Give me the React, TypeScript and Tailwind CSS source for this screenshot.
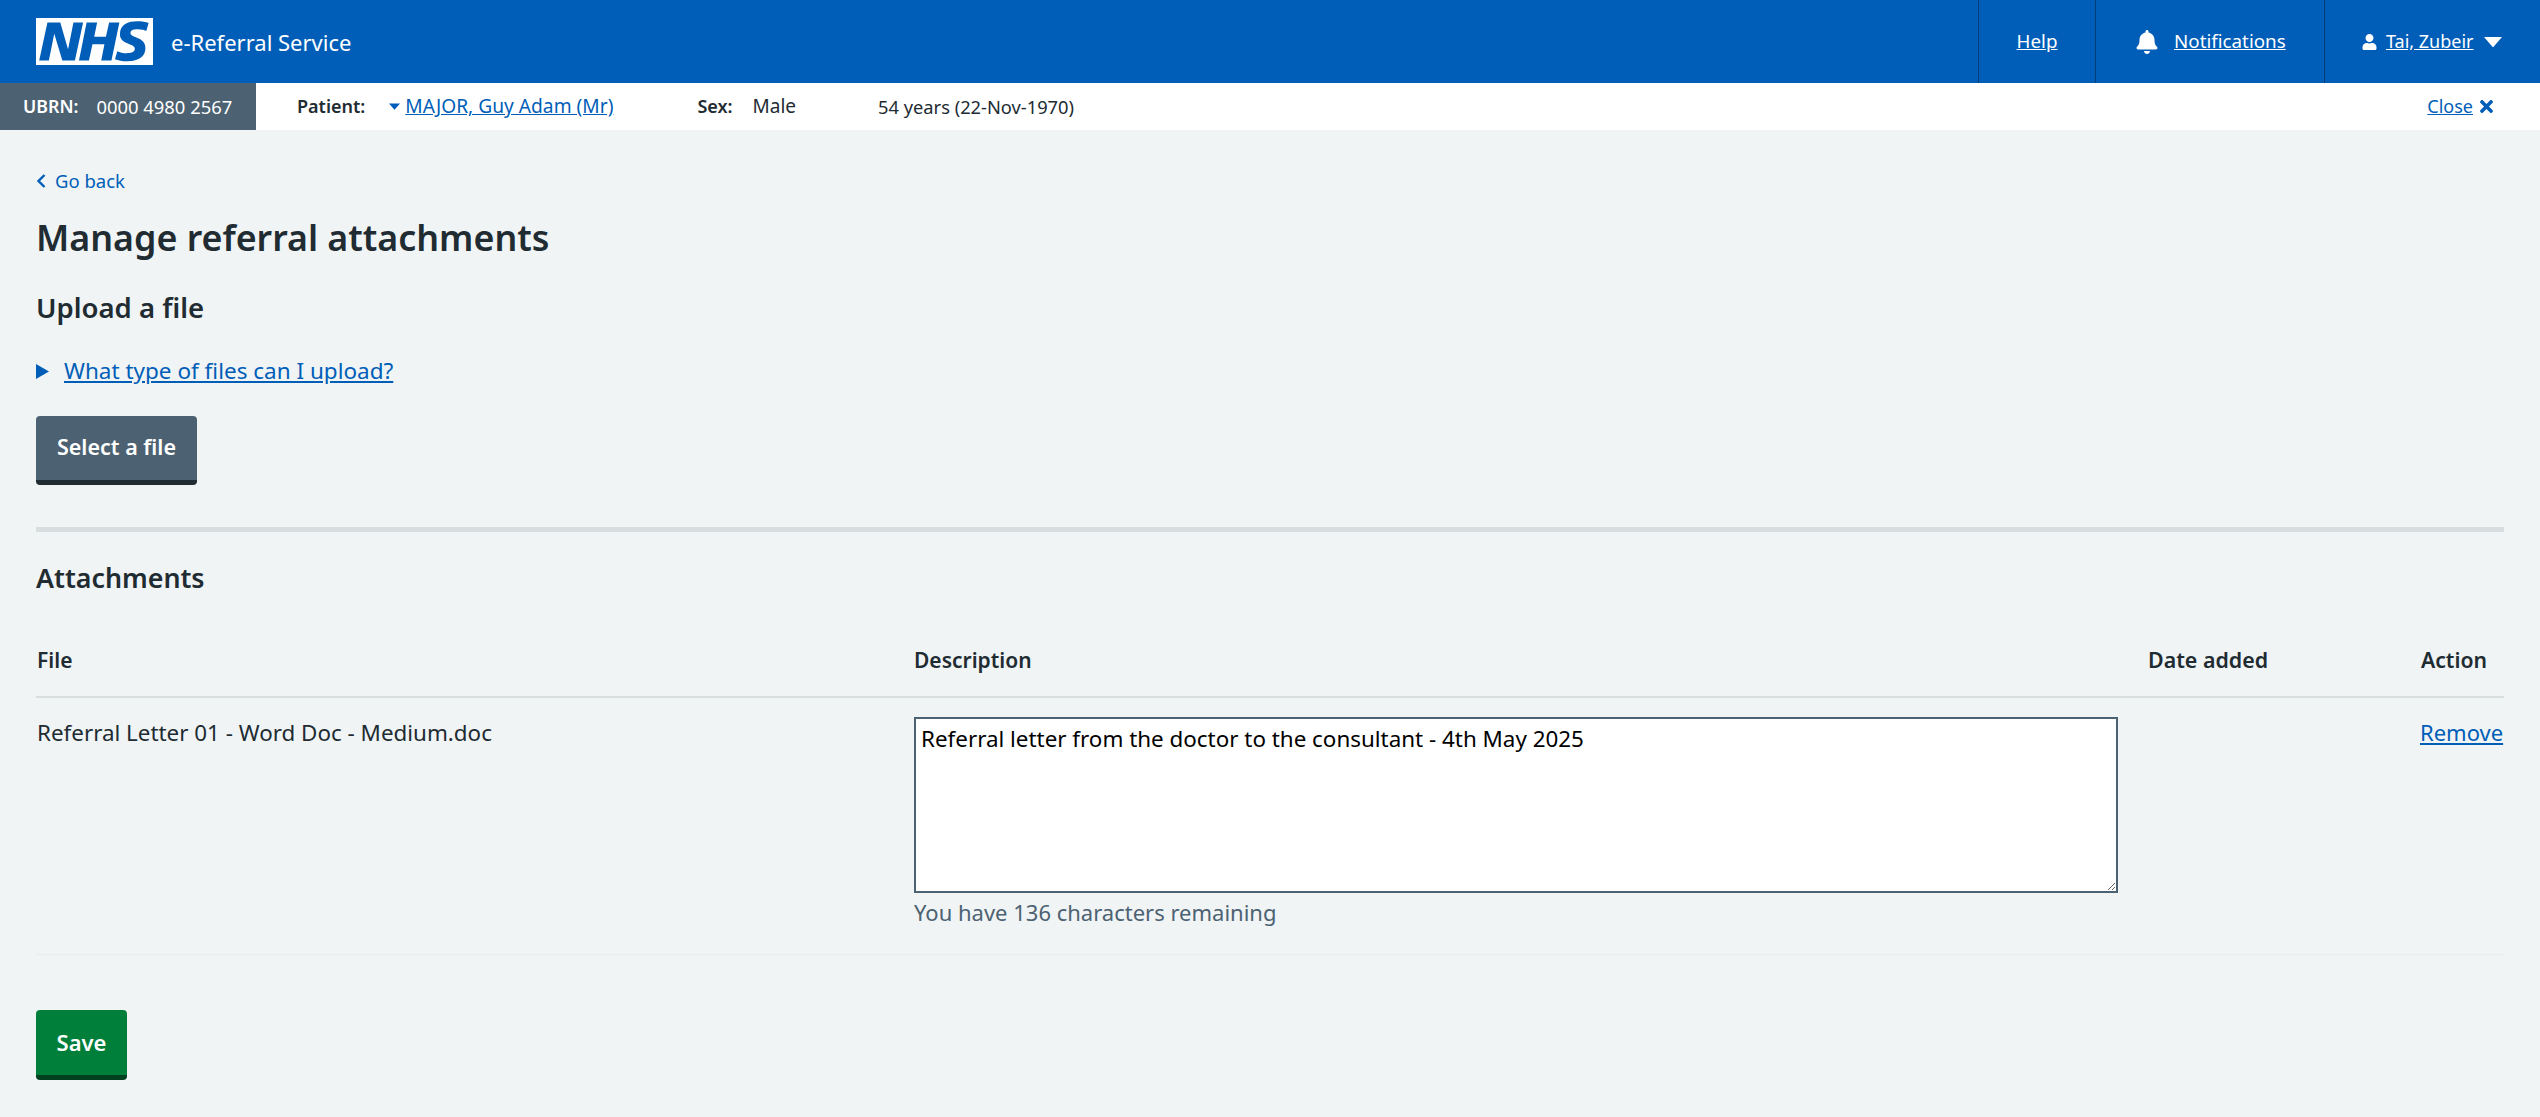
import { FaBell, FaTimes, FaUser } from "react-icons/fa";

function NhsLogo() {
  return (
    <svg viewBox="0 0 40 16" className="h-[47px] w-[117px] shrink-0" preserveAspectRatio="none">
      <path fill="#fff" d="M0 0h40v16H0z" />
      <path
        fill="#005eb8"
        d="M3.9 1.5h4.4l2.6 9h.1l1.8-9h3.3l-2.8 13H9l-2.7-9h-.1l-1.8 9H1.1M17.3 1.5h3.6l-1 4.9h4L25 1.5h3.5l-2.7 13h-3.5l1.1-5.6h-4.1l-1.2 5.6h-3.4M37.7 4.4c-.7-.3-1.6-.6-2.9-.6-1.4 0-2.5.2-2.5 1.3 0 1.8 5.1 1.2 5.1 5.1 0 3.6-3.3 4.5-6.4 4.5-1.3 0-2.9-.3-4-.7l.8-2.7c.7.4 2.1.7 3.2.7s2.8-.2 2.8-1.5c0-2.1-5.1-1.3-5.1-5 0-3.4 2.9-4.4 5.8-4.4 1.6 0 3.1.2 4 .6"
      />
    </svg>
  );
}

function Caret({ className }: { className: string }) {
  return (
    <svg viewBox="0 0 18 10" className={className}>
      <path fill="currentColor" d="M0 0h18L9.8 9.6a1 1 0 0 1-1.6 0z" />
    </svg>
  );
}

function Header() {
  return (
    <header className="flex h-[83px] items-stretch bg-[#005eb8] text-white">
      <div className="flex items-center pl-9">
        <NhsLogo />
        <span className="mt-[2px] ml-[18px] text-[22px]">e-Referral Service</span>
      </div>
      <nav className="ml-auto flex items-stretch text-[18.8px]">
        <div className="flex w-[117px] items-center justify-center border-l border-[#003d78]">
          <a href="#" className="mt-[-1px] underline">Help</a>
        </div>
        <div className="flex w-[229px] items-center border-l border-[#003d78] pl-[40px]">
          <FaBell className="h-[24px] w-[22px]" />
          <a href="#" className="mt-[-1px] ml-[16px] underline">Notifications</a>
        </div>
        <div className="flex w-[216px] items-center border-l border-[#003d78] pl-[37px]">
          <FaUser className="h-[16px] w-[15px]" />
          <a href="#" className="mt-[-1px] ml-[9px] text-[18px] underline">Tai, Zubeir</a>
          <Caret className="ml-[10px] h-[10px] w-[18px]" />
        </div>
      </nav>
    </header>
  );
}

function PatientBar() {
  return (
    <div className="flex h-[47px] items-center bg-white text-[18px] text-[#212b32]">
      <div className="flex h-full w-[256px] items-center bg-[#4c6272] pl-[23px] text-white">
        <strong className="text-[17.8px] font-semibold">UBRN:</strong>
        <span className="ml-[18px] text-[18.4px]">0000 4980 2567</span>
      </div>
      <strong className="ml-[41px] font-semibold">Patient:</strong>
      <Caret className="ml-[24px] h-[7px] w-[11px] text-[#005eb8]" />
      <a href="#" className="ml-[5px] text-[19.2px] text-[#005eb8] underline">MAJOR, Guy Adam (Mr)</a>
      <strong className="ml-[84px] font-semibold">Sex:</strong>
      <span className="ml-[20px] text-[19px]">Male</span>
      <span className="ml-[82px] text-[18.3px]">54 years (22-Nov-1970)</span>
      <div className="ml-auto flex items-center pr-[47px] text-[#005eb8]">
        <a href="#" className="underline">Close</a>
        <FaTimes className="ml-[7px] h-[19px] w-[13px]" />
      </div>
    </div>
  );
}

function Button({ label, className }: { label: string; className: string }) {
  return (
    <button
      type="button"
      className={`rounded-[4px] border-b-[5px] font-semibold text-white ${className}`}
    >
      {label}
    </button>
  );
}

const ROW_COLUMNS = "grid grid-cols-[878px_1234px_273px_83px]";

export default function App() {
  return (
    <div className="min-h-[1117px] bg-[#f0f4f5] font-['Noto_Sans',sans-serif] text-[#212b32]">
      <Header />
      <PatientBar />
      <main className="px-9 pt-[35px]">
        <a href="#" className="flex h-[32px] items-center text-[18.5px] text-[#005eb8]">
          <svg viewBox="0 0 10 14" className="mr-[9px] h-[14px] w-[10px]">
            <path d="M8.5 1 2.5 7l6 6" fill="none" stroke="currentColor" strokeWidth="2.4" />
          </svg>
          Go back
        </a>
        <h1 className="mt-[16px] text-[35.8px] leading-[48px] font-semibold">Manage referral attachments</h1>
        <h2 className="mt-[29px] text-[27.5px] leading-[36px] font-semibold">Upload a file</h2>
        <div className="mt-[29px] flex h-[32px] items-center text-[22.5px] text-[#005eb8]">
          <svg viewBox="0 0 13 15" className="mr-[15px] h-[15px] w-[13px]">
            <path fill="currentColor" d="M0 0l13 7.5L0 15z" />
          </svg>
          <a href="#" className="underline">What type of files can I upload?</a>
        </div>
        <Button label="Select a file" className="mt-[29px] block h-[69px] w-[161px] border-[#212b32] bg-[#4c6272] pb-[2px] text-[21.5px]" />
        <div className="mt-[42px] h-[5px] bg-[#d8dde0]" />
        <h2 className="mt-[28px] text-[26.8px] leading-[36px] font-semibold">Attachments</h2>
        <div className={`${ROW_COLUMNS} mt-[48px] h-[54px] border-b-2 border-[#d8dde0] text-[21px] leading-[32px] font-semibold`}>
          <span className="pl-px">File</span>
          <span>Description</span>
          <span className="text-[21.4px]">Date added</span>
          <span className="text-[21.2px]">Action</span>
        </div>
        <div className={`${ROW_COLUMNS} border-b border-[#e8edee] pt-[19px] pb-[26px] text-[22.4px]`}>
          <span className="pl-px leading-[32px]">Referral Letter 01 - Word Doc - Medium.doc</span>
          <div>
            <textarea
              className="block h-[176px] w-[1204px] rounded-none border-2 border-[#4c6272] bg-white px-[5px] py-[4px] text-[22.4px] leading-[32px] text-black"
              defaultValue="Referral letter from the doctor to the consultant - 4th May 2025"
            />
            <p className="mt-[3px] text-[22px] leading-[32px] text-[#4c6272]">You have 136 characters remaining</p>
          </div>
          <span />
          <a href="#" className="mt-[-1px] ml-[-1px] text-[22px] leading-[32px] text-[#005eb8] underline">Remove</a>
        </div>
        <Button label="Save" className="mt-[55px] block h-[70px] w-[91px] border-[#00401e] bg-[#007f3b] text-[22px]" />
      </main>
    </div>
  );
}
